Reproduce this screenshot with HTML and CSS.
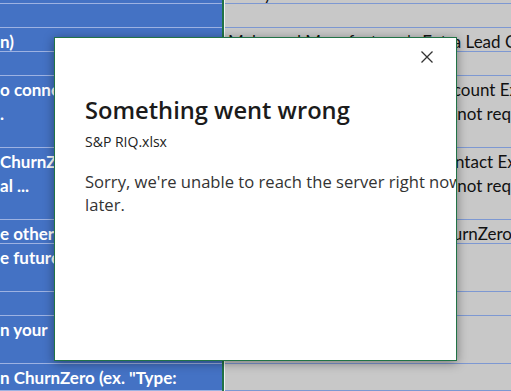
FILE: index.html
```html
<!DOCTYPE html>
<html lang="en">
<head>
    <meta charset="UTF-8">
    <title>Something went wrong</title>
    <link rel="stylesheet" href="styles.css">
</head>
<body>
    <div class="sheet">
        <div class="cell head"></div>
        <div class="sel"></div>
        <div class="cell"><span class="ln">Entity</span></div>

        <div class="cell head"></div>
        <div class="cell"></div>

        <div class="cell head"><span class="ln">n)</span></div>
        <div class="cell"><span class="ln">Make and Manufacturer's Extra Lead Columns</span></div>

        <div class="cell head"></div>
        <div class="cell"></div>

        <div class="cell head"><span class="ln">o connect</span><span class="ln">.</span></div>
        <div class="cell"><span class="ln">Fields to include on the full Account Export</span><span class="ln">Optional fields can all go here (not required)</span></div>

        <div class="cell head"><span class="ln">ChurnZero</span><span class="ln">al ...</span></div>
        <div class="cell"><span class="ln">Fields to include on the full Contact Export</span><span class="ln">Optional fields can all go here (not required)</span></div>

        <div class="cell head"><span class="ln">e other</span></div>
        <div class="cell"><span class="ln">Sync all other records from ChurnZero</span></div>

        <div class="cell head"><span class="ln">e future</span></div>
        <div class="cell"></div>

        <div class="cell head"></div>
        <div class="cell"></div>

        <div class="cell head"><span class="ln">n your</span></div>
        <div class="cell"></div>

        <div class="cell head"><span class="ln">n ChurnZero (ex. "Type:</span></div>
        <div class="cell"></div>
    </div>

    <div class="dialog">
        <button class="close" aria-label="Close">
            <svg width="12" height="12" viewBox="0 0 12 12">
                <path d="M0.5 0.5 L11.5 11.5 M11.5 0.5 L0.5 11.5" stroke="#333" stroke-width="1.3" fill="none"/>
            </svg>
        </button>
        <h1 class="title">Something went wrong</h1>
        <div class="file">S&amp;P RIQ.xlsx</div>
        <p class="msg">Sorry, we're unable to reach the server right now. Please try again later.</p>
    </div>
</body>
</html>
```

FILE: styles.css
```css
*{
    margin:0;
    padding:0;
    box-sizing:border-box;
}
body{
    width:511px;
    height:391px;
    overflow:hidden;
    background:#c8c8c8;
    position:relative;
}
.sheet{
    display:grid;
    grid-template-columns:222px 3px 1fr;
    grid-template-rows:24px 24px 24px 24px 72px 72px 24px 48px 24px 48px 27px;
    margin-top:-20px;
    font-family:Lato, "Liberation Sans", sans-serif;
    font-size:17px;
}
.cell{
    overflow:hidden;
    white-space:nowrap;
    padding:2px 0 0 3px;
    border-bottom:1px solid #7d98d2;
    background:#c8c8c8;
    color:#111;
}
.cell.head{
    padding-left:0;
    background:#4472c4;
    border-bottom-color:#9db2e2;
    color:#fff;
    font-weight:bold;
}
.ln{
    display:block;
    line-height:24px;
}
.sel{
    grid-column:2;
    grid-row:1 / -1;
    background:#217346;
    border-right:1px solid #f2f2f2;
}
.dialog{
    position:absolute;
    left:54px;
    top:37px;
    width:403px;
    height:324px;
    overflow:hidden;
    background:#fff;
    border:1px solid #217346;
    box-shadow:0 2px 10px rgba(0,0,0,.4);
    padding:56px 0 0 30px;
    font-family:"Open Sans", "Noto Sans", sans-serif;
    color:#222;
}
.close{
    position:absolute;
    top:13px;
    right:23px;
    width:12px;
    height:12px;
    border:none;
    background:none;
    display:flex;
}
.title{
    font-size:23.7px;
    font-weight:600;
    line-height:32px;
    color:#1b1b1b;
}
.file{
    font-size:14px;
    line-height:20px;
    margin-top:6px;
    color:#222;
}
.msg{
    width:520px;
    margin-top:18px;
    font-size:16.6px;
    line-height:23px;
    color:#333;
}
```
